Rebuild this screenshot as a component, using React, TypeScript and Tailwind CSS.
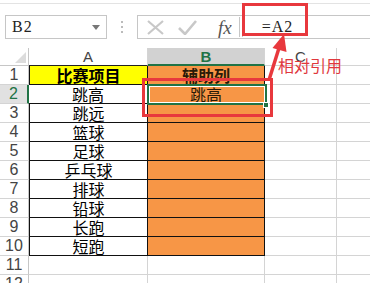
const rows = ['比赛项目', '跳高', '跳远', '篮球', '足球', '乒乓球', '排球', '铅球', '长跑', '短跑'];

const cjk = { fontFamily: '"Noto Sans CJK SC", sans-serif' };
const num = { fontFamily: '"Liberation Sans", Arial, sans-serif' };
const serif = { fontFamily: '"Liberation Serif", "Times New Roman", serif' };

function FormulaBar() {
  return (
    <div className="h-[48px] bg-white relative">
      <div className="h-[4px] border-b border-[#e3e3e3]" />
      <div className="flex items-start pt-[11px]">
        <div className="ml-[5px] w-[102px] h-[24px] border border-[#c6c6c6] flex items-center justify-between pl-[6px] pr-[6px]">
          <span className="text-[16px] text-[#222] tracking-[1px]" style={serif}>B2</span>
          <svg width="8" height="5" viewBox="0 0 8 5"><path d="M0 0 L8 0 L4 5 Z" fill="#777" /></svg>
        </div>
        <div className="w-[30px] h-[24px] flex flex-col items-center justify-center gap-[3px]">
          <span className="w-[2px] h-[2px] bg-[#bbb]" />
          <span className="w-[2px] h-[2px] bg-[#bbb]" />
          <span className="w-[2px] h-[2px] bg-[#bbb]" />
        </div>
        <div className="flex-1 h-[24px] border border-r-0 border-[#c6c6c6] flex items-center">
          <svg className="ml-[9px]" width="17" height="15" viewBox="0 0 17 15">
            <path d="M1 1 L16 14 M16 1 L1 14" stroke="#c8c8c8" strokeWidth="2.2" />
          </svg>
          <svg className="ml-[14px]" width="19" height="15" viewBox="0 0 19 15">
            <path d="M1 8 L7 14 L18 1" stroke="#c8c8c8" strokeWidth="2.6" fill="none" />
          </svg>
          <span className="ml-[21px] text-[19px] italic text-[#555] leading-none" style={serif}>fx</span>
          <span className="ml-[7px] w-[1px] h-[20px] bg-[#c6c6c6]" />
          <span className="ml-[2px] w-[1px] h-[20px] bg-[#c6c6c6]" />
          <span className="ml-[19px] text-[16px] text-[#222] tracking-[1px]" style={serif}>=A2</span>
        </div>
      </div>
    </div>
  );
}

function HeaderRow() {
  return (
    <div className="flex h-[18px] text-[15px] text-[#444] leading-none" style={num}>
      <div className="w-[29px] shrink-0 border-r border-b border-[#c6c6c6] relative">
        <svg className="absolute right-[2px] bottom-[2px]" width="11" height="11" viewBox="0 0 11 11">
          <path d="M11 0 L11 11 L0 11 Z" fill="#dcdcdc" />
        </svg>
      </div>
      <div className="w-[119px] shrink-0 border-r border-b border-r-[#d4d4d4] border-b-[#222] flex items-center justify-center">A</div>
      <div className="w-[117px] shrink-0 bg-[#d2d2d2] border-r border-[#d4d4d4] border-b-2 border-b-[#217346] flex items-center justify-center font-bold text-[#217346]">B</div>
      <div className="w-[72px] shrink-0 border-r border-b border-[#d4d4d4] flex items-center justify-center">C</div>
      <div className="flex-1 border-b border-[#d4d4d4]" />
    </div>
  );
}

function Row({ n, a }: { n: number; a?: string }) {
  const inTable = a !== undefined;
  const sel = n === 2;
  return (
    <div className="flex h-[19px] leading-[18px]">
      <div
        className={`w-[29px] shrink-0 border-b border-[#d4d4d4] flex items-center justify-center text-[16px] ${
          sel ? 'bg-[#e1e1e1] text-[#217346] border-r-2 border-r-[#217346]' : 'text-[#444] border-r border-r-[#c6c6c6]'
        }`}
        style={num}
      >
        {n}
      </div>
      {inTable ? (
        <>
          <div
            className={`w-[119px] shrink-0 border-r border-b border-[#111] flex items-center justify-center text-[16px] text-black ${
              n === 1 ? 'bg-[#ffff00] font-bold' : 'bg-white'
            } ${sel ? '' : 'border-l'}`}
            style={cjk}
          >
            {a}
          </div>
          <div
            className="w-[117px] shrink-0 bg-[#f79646] border-r border-b border-[#111] flex items-center justify-center text-[16px] text-[#2a1a08]"
            style={cjk}
          >
            {n === 1 ? <span className="font-bold">辅助列</span> : sel ? '跳高' : ''}
          </div>
        </>
      ) : (
        <>
          <div className="w-[119px] shrink-0 border-r border-b border-[#d4d4d4]" />
          <div className="w-[117px] shrink-0 border-r border-b border-[#d4d4d4]" />
        </>
      )}
      <div className="w-[72px] shrink-0 border-r border-b border-[#d4d4d4]" />
      <div className="flex-1 border-b border-[#d4d4d4]" />
    </div>
  );
}

export default function App() {
  return (
    <div className="w-[370px] h-[283px] overflow-hidden bg-white relative">
      <FormulaBar />
      <HeaderRow />
      {rows.map((a, i) => (
        <Row key={i} n={i + 1} a={a} />
      ))}
      <Row n={11} />
      <Row n={12} />

      {/* selected cell B2 */}
      <div className="absolute left-[147px] top-[84px] w-[120px] h-[21px] border-2 border-[#217346]">
        <div className="w-full h-full border border-white" />
      </div>
      <div className="absolute left-[263px] top-[102px] w-[6px] h-[6px] bg-[#217346] border border-white" />

      {/* annotations */}
      <div className="absolute left-[242px] top-[3px] w-[66px] h-[33px] border-[3px] border-[#e8383d]" />
      <div className="absolute left-[142px] top-[78px] w-[131px] h-[39px] border-[3px] border-[#e8383d]" />
      <svg className="absolute left-0 top-0" width="370" height="283" viewBox="0 0 370 283">
        <path d="M269 80 L279 48" stroke="#e8383d" strokeWidth="3.5" />
        <path d="M284 34 L272.5 48 L286.5 52 Z" fill="#e8383d" />
      </svg>
      <span className="absolute left-[278px] top-[57px] text-[16px] leading-none text-[#e0383d]" style={cjk}>相对引用</span>
    </div>
  );
}
